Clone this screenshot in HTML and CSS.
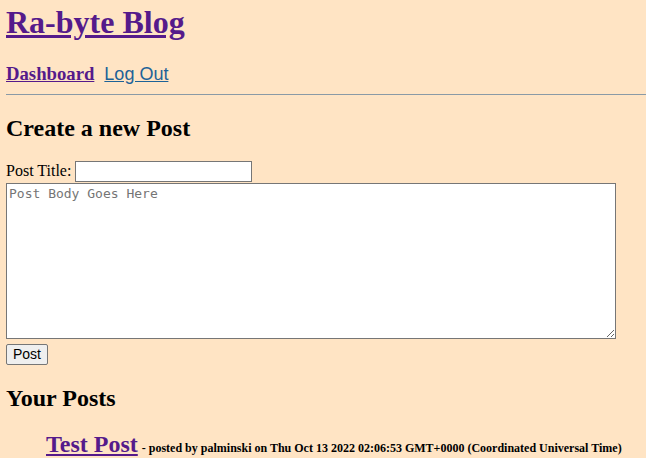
FILE: index.html
```html
<!DOCTYPE html>
<html>
<head>
<meta charset="utf-8">
<link rel="stylesheet" href="styles.css">
</head>
<body>
<header class="site-header">
  <h1 class="site-title"><a href="#">Ra-byte Blog</a></h1>
  <nav class="nav">
    <a class="nav-dash" href="#">Dashboard</a>
    <a class="nav-logout" href="#">Log Out</a>
  </nav>
</header>
<hr class="rule">
<main>
  <h2 class="section-title">Create a new Post</h2>
  <form class="post-form">
    <label class="title-label">Post Title: <input class="title-input" type="text"></label>
    <textarea class="body-input" placeholder="Post Body Goes Here"></textarea>
    <button class="post-btn" type="button">Post</button>
  </form>
  <h2 class="section-title posts-title">Your Posts</h2>
  <ul class="post-list">
    <li class="post-item"><a class="post-link" href="#">Test Post</a> <span class="post-meta">- posted by palminski on Thu Oct 13 2022 02:06:53 GMT+0000 (Coordinated Universal Time)</span></li>
  </ul>
</main>
</body>
</html>
```
FILE: styles.css
```css
html, body {
  background: #ffe4c4;
}
body {
  margin: 0;
  padding: 0 6px;
  font-family: "Liberation Serif", "Times New Roman", serif;
  font-size: 16px;
  color: #000;
}
a {
  color: #551a8b;
}
.site-title {
  margin: 0;
  padding-top: 4px;
  font-size: 32px;
  line-height: 37px;
}
.nav {
  margin-top: 22px;
  display: flex;
  align-items: baseline;
  gap: 10px;
}
.nav-dash {
  font-weight: bold;
  font-size: 18.72px;
}
.nav-logout {
  font-family: "Liberation Sans", Arial, sans-serif;
  font-size: 18px;
  color: #1d6298;
}
.rule {
  margin: 9px -6px 0 0;
  border: 0;
  border-top: 1px solid #8a9aa6;
  height: 0;
}
.section-title {
  font-size: 24px;
  margin: 20px 0 18px;
}
.post-form {
  display: flex;
  flex-direction: column;
  align-items: flex-start;
}
.title-label {
  line-height: 20px;
}
.title-input {
  box-sizing: border-box;
  width: 177px;
  height: 21px;
  padding: 1px 2px;
  margin: 1px 0 0;
  border: 1px solid #767676;
  background: #fff;
  font-size: 13px;
}
.body-input {
  box-sizing: border-box;
  width: 610px;
  height: 156px;
  padding: 2px;
  margin: 1px 0 0;
  border: 1px solid #767676;
  font-family: "DejaVu Sans Mono", monospace;
  font-size: 13px;
  background: #fff;
}
.body-input::placeholder {
  color: #757575;
}
.post-btn {
  box-sizing: border-box;
  margin-top: 5px;
  height: 21px;
  font-family: "Liberation Sans", Arial, sans-serif;
  font-size: 14px;
  line-height: 17px;
  padding: 0 6px;
  border: 1px solid #767676;
  border-radius: 2px;
  background: #efefef;
  color: #000;
}
.posts-title {
  margin-top: 20px;
  margin-bottom: 19px;
}
.post-list {
  list-style: none;
  margin: 0;
  padding-left: 40px;
}
.post-link {
  font-weight: bold;
  font-size: 24px;
}
.post-meta {
  font-weight: bold;
  font-size: 12px;
}
```
